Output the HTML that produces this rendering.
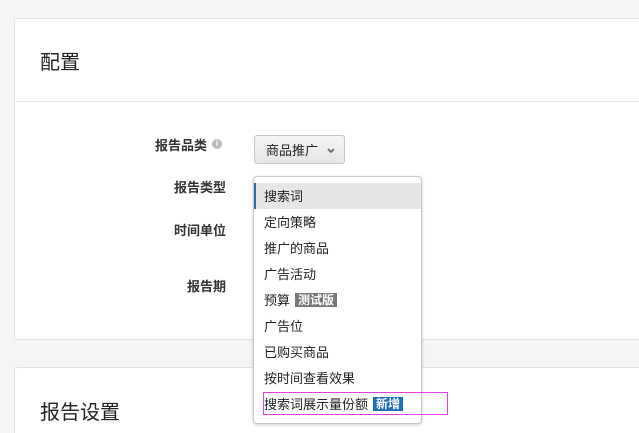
<!DOCTYPE html>
<html><head><meta charset="utf-8"><style>
html,body{margin:0;width:639px;height:433px;overflow:hidden}
body{background:#f5f5f5;font-family:"Liberation Sans","Noto Sans CJK SC",sans-serif;position:relative;color:#222}
.card{position:absolute;left:14px;right:-5px;background:#fff;border:1px solid #e3e3e3;border-radius:3px}
.t{position:absolute;font-size:20px;color:#222}
.lab{position:absolute;font-size:13px;font-weight:bold;color:#333;text-align:right;width:100px}
.btn{position:absolute;left:254px;top:135px;width:91px;height:29px;border:1px solid #c8c8c8;border-radius:3px;background:linear-gradient(#f4f4f4,#e6e6e6);font-size:13px;line-height:29px;box-sizing:border-box;padding-left:11px}
.dd{position:absolute;left:253px;top:176px;width:169px;height:248px;background:#fff;border:1px solid #c8c8c8;border-radius:4px;box-shadow:0 1px 3px rgba(0,0,0,.2);box-sizing:border-box}
.it{position:absolute;left:10px;font-size:13px;line-height:26px;white-space:nowrap;top:1px}
.tag{display:inline-block;color:#fff;font-size:12px;font-weight:bold;line-height:14px;padding:0 3px;margin-left:5px;vertical-align:1px}
</style></head><body>
<div class="card" style="top:18px;height:320px">
 <div style="position:absolute;left:0;right:0;top:82px;border-top:1px solid #e3e3e3"></div>
</div>
<div class="t" style="left:40px;top:46px">配置</div>
<div class="lab" style="left:107px;top:135px">报告品类</div>
<div style="position:absolute;left:212px;top:139px;width:10px;height:10px;border-radius:50%;background:#bbb;color:#fff;font-size:8px;line-height:10px;text-align:center;font-weight:bold">i</div>
<div class="lab" style="left:126px;top:177px">报告类型</div>
<div class="lab" style="left:126px;top:220px">时间单位</div>
<div class="lab" style="left:126px;top:276px">报告期</div>
<div class="btn">商品推广<svg style="position:absolute;left:72px;top:12px" width="8" height="6" viewBox="0 0 8 6"><path d="M1 1l3 3 3-3" stroke="#666" stroke-width="1.8" fill="none"/></svg></div>
<div class="card" style="top:367px;height:70px"></div>
<div class="t" style="left:40px;top:396px">报告设置</div>
<div class="dd">
 <div style="position:absolute;left:0;right:0;top:6px;height:26px;background:#e6e6e6;border-left:2px solid #3a6aa0"></div>
 <div class="it" style="top:7px">搜索词</div>
 <div class="it" style="top:33px">定向策略</div>
 <div class="it" style="top:59px">推广的商品</div>
 <div class="it" style="top:85px">广告活动</div>
 <div class="it" style="top:111px">预算<span class="tag" style="background:#777">测试版</span></div>
 <div class="it" style="top:137px">广告位</div>
 <div class="it" style="top:163px">已购买商品</div>
 <div class="it" style="top:189px">按时间查看效果</div>
 <div class="it" style="top:215px">搜索词展示量份额<span class="tag" style="background:#1e6fb8">新增</span></div>
</div>
<div style="position:absolute;left:263px;top:392px;width:185px;height:23px;border:1px solid #e040e0;box-sizing:border-box"></div>
</body></html>
